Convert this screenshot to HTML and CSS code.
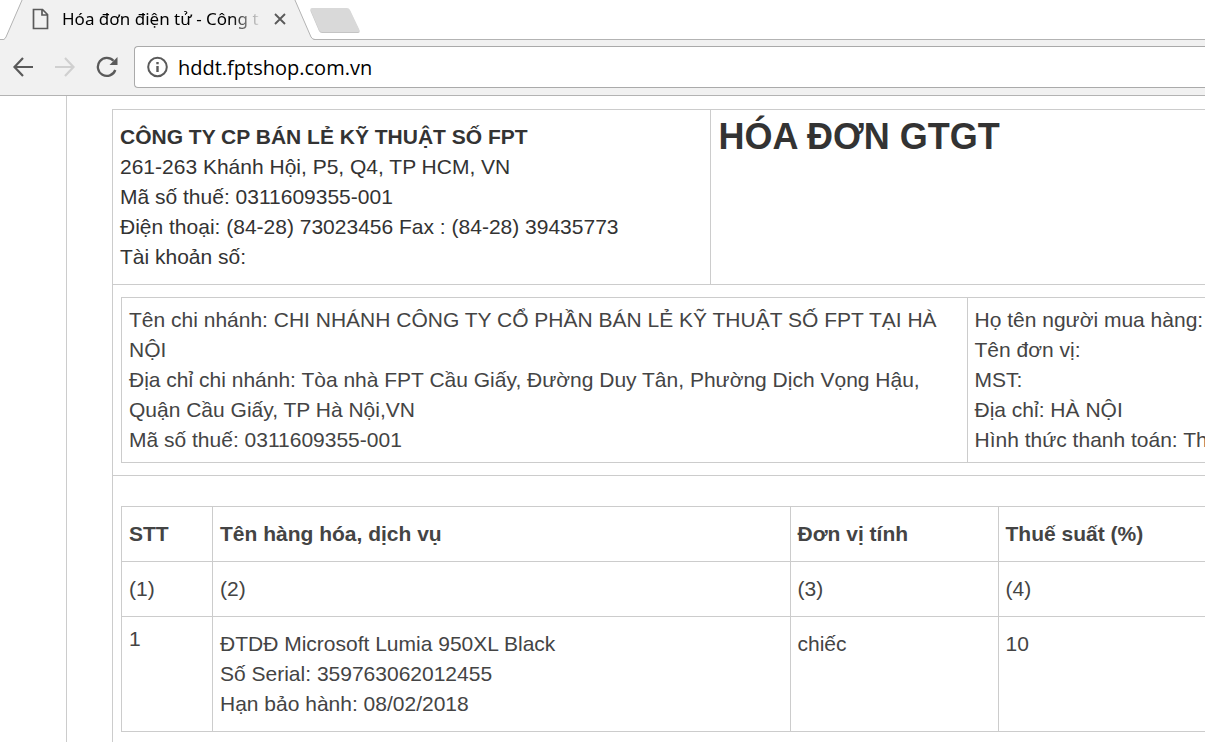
FILE: index.html
```
<!DOCTYPE html>
<html lang="vi">
<head>
    <meta charset="UTF-8">
    <meta name="viewport" content="width=device-width, initial-scale=1.0">
    <title>Hóa đơn điện tử</title>
    <link rel="stylesheet" href="styles.css">
</head>
<body>

    <!-- Browser bar -->
    <header class="browser">
        <div class="tabstrip">
            <div class="tab">
                <svg class="tab-shape" width="320" height="40" viewBox="0 0 320 40">
                    <path d="M3 40 Q5 39.5 6 37 L22.500 -1 H294.500 L311 37 Q312.500 40 315 40 Z" fill="#f1f1f1"/>
                    <path d="M0 39.500 H3.500 Q5 39 6 37 L22.500 -1 M294.500 -1 L311 37 Q312.500 39.500 315 39.500 H320" fill="none" stroke="#b3b3b3"/>
                </svg>
                <svg class="tab-icon" width="18" height="22" viewBox="0 0 18 22">
                    <path d="M2 1.500 H10.500 L15.500 6.500 V20.500 H1.500 V1.500 Z M10 1.500 V7 H15.500" fill="none" stroke="#5a5a5a" stroke-width="1.700"/>
                </svg>
                <span class="tab-title">Hóa đơn điện tử - Công t</span>
                <button class="tab-close" aria-label="Đóng thẻ">
                    <svg width="12" height="12" viewBox="0 0 12 12">
                        <path d="M1 1 L11 11 M11 1 L1 11" stroke="#5a5a5a" stroke-width="1.900"/>
                    </svg>
                </button>
            </div>
            <button class="new-tab" aria-label="Thẻ mới">
                <svg width="52" height="27" viewBox="0 0 52 27">
                    <path d="M3 2 H38 Q40 2 41 4 L50.500 24 Q51 26 49 26 H13 Q11 26 10 24 L1.500 4 Q1 2 3 2 Z" fill="#c4c4c4"/>
                    <path d="M3 1 H38 Q40 1 41 3 L50.500 23 Q51 25 49 25 H13 Q11 25 10 23 L1.500 3 Q1 1 3 1 Z" fill="#d9d9d9"/>
                </svg>
            </button>
        </div>
        <div class="toolbar">
            <button class="nav-button" aria-label="Quay lại">
                <svg width="22" height="22" viewBox="0 0 22 22">
                    <path d="M21 11 H3 M11 2 L2.500 11 L11 20" fill="none" stroke="#5a5a5a" stroke-width="2.200"/>
                </svg>
            </button>
            <button class="nav-button" aria-label="Tiến">
                <svg width="22" height="22" viewBox="0 0 22 22">
                    <path d="M1 11 H19 M11 2 L19.500 11 L11 20" fill="none" stroke="#d0d0d0" stroke-width="2.200"/>
                </svg>
            </button>
            <button class="nav-button" aria-label="Tải lại">
                <svg width="22" height="22" viewBox="0 0 22 22">
                    <path d="M19.300 14 A9 9 0 1 1 17.500 4.800" fill="none" stroke="#5a5a5a" stroke-width="2.300"/>
                    <path d="M21.500 1 V9 H13.500 Z" fill="#5a5a5a"/>
                </svg>
            </button>
            <div class="address">
                <svg width="22" height="22" viewBox="0 0 22 22">
                    <circle cx="10.500" cy="11" r="9.300" fill="none" stroke="#5a5a5a" stroke-width="2"/>
                    <path d="M10.500 10 V16 M10.500 6 V8.200" stroke="#5a5a5a" stroke-width="2.400"/>
                </svg>
                <input class="url" type="text" aria-label="Địa chỉ" value="hddt.fptshop.com.vn">
            </div>
        </div>
    </header>

    <!-- Invoice -->
    <main class="page">
        <div class="invoice">
            <section class="head">
                <div class="company">
                    <b>CÔNG TY CP BÁN LẺ KỸ THUẬT SỐ FPT</b><br>
                    261-263 Khánh Hội, P5, Q4, TP HCM, VN<br>
                    Mã số thuế: 0311609355-001<br>
                    Điện thoại: (84-28) 73023456 Fax : (84-28) 39435773<br>
                    Tài khoản số:
                </div>
                <h1 class="title">HÓA ĐƠN GTGT</h1>
            </section>

            <section class="parties">
                <div class="branch">
                    Tên chi nhánh: CHI NHÁNH CÔNG TY CỔ PHẦN BÁN LẺ KỸ THUẬT SỐ FPT TẠI HÀ NỘI<br>
                    Địa chỉ chi nhánh: Tòa nhà FPT Cầu Giấy, Đường Duy Tân, Phường Dịch Vọng Hậu, Quận Cầu Giấy, TP Hà Nội,VN<br>
                    Mã số thuế: 0311609355-001
                </div>
                <div class="buyer">
                    Họ tên người mua hàng:<br>
                    Tên đơn vị:<br>
                    MST:<br>
                    Địa chỉ: HÀ NỘI<br>
                    Hình thức thanh toán: Th
                </div>
            </section>

            <section class="goods">
                <table class="items">
                    <thead>
                        <tr>
                            <th class="col-no">STT</th>
                            <th class="col-name">Tên hàng hóa, dịch vụ</th>
                            <th class="col-unit">Đơn vị tính</th>
                            <th>Thuế suất (%)</th>
                        </tr>
                    </thead>
                    <tbody>
                        <tr>
                            <td>(1)</td>
                            <td>(2)</td>
                            <td>(3)</td>
                            <td>(4)</td>
                        </tr>
                        <tr>
                            <td class="number">1</td>
                            <td>
                                ĐTDĐ Microsoft Lumia 950XL Black<br>
                                Số Serial: 359763062012455<br>
                                Hạn bảo hành: 08/02/2018
                            </td>
                            <td>chiếc</td>
                            <td>10</td>
                        </tr>
                    </tbody>
                </table>
            </section>
        </div>
    </main>

</body>
</html>
```

FILE: styles.css
```
* {
    box-sizing: border-box;
}
body {
    margin: 0;
    min-height: 100vh;
    display: flex;
    flex-direction: column;
    overflow: hidden;
    background-color: white;
    color: #444;
    font-family: "Liberation Sans", Arial, sans-serif;
    font-size: 21px;
    line-height: 30px;
}
button {
    padding: 0;
    border: 0;
    background: none;
    display: flex;
}

/* Browser bar */
.browser {
    font-family: "Open Sans", "Segoe UI", sans-serif;
    color: black;
}
.tabstrip {
    display: flex;
    height: 40px;
    border-bottom: 1px solid #b3b3b3;
}
.tab {
    position: relative;
    display: flex;
    align-items: center;
    width: 308px;
    height: 38px;
    padding: 0 22px 0 32px;
}
.tab-shape {
    position: absolute;
    left: 0;
    top: 0;
}
.tab-icon, .tab-title, .tab-close {
    position: relative;
}
.tab-title {
    flex: 1;
    margin: 0 12px;
    overflow: hidden;
    white-space: nowrap;
    font-family: "Noto Sans", "Segoe UI", sans-serif;
    font-size: 17px;
    -webkit-mask-image: linear-gradient(to right, black 85%, transparent);
    mask-image: linear-gradient(to right, black 85%, transparent);
}
.new-tab {
    padding-top: 7px;
    margin-left: 1px;
}
.toolbar {
    display: flex;
    align-items: center;
    gap: 20px;
    height: 56px;
    padding-left: 12px;
    padding-bottom: 1px;
    background-color: #f1f1f1;
    border-bottom: 1px solid #b3b3b3;
}
.address {
    flex: 1;
    display: flex;
    align-items: center;
    gap: 9px;
    height: 42px;
    margin-left: -4px;
    padding-left: 12px;
    background-color: white;
    border: 1px solid #aaa;
    border-right: 0;
    border-radius: 4px 0 0 4px;
}
.url {
    flex: 1;
    padding: 0;
    border: 0;
    outline: 0;
    color: black;
    font-family: inherit;
    font-size: 20px;
}

/* Invoice */
.page {
    flex: 1;
    display: flex;
    margin-left: 66px;
    padding: 13px 0 0 45px;
    border-left: 1px solid #ccc;
}
.invoice {
    flex: 1;
    border-left: 1px solid #ccc;
    border-top: 1px solid #ccc;
}
.head {
    display: flex;
    color: #333;
    border-bottom: 1px solid #ccc;
}
.company {
    width: 54.8%;
    padding: 12px 7px;
    border-right: 1px solid #ccc;
}
.title {
    margin: 0;
    padding: 7px;
    font-size: 36px;
    line-height: 40px;
}
.parties {
    display: flex;
    padding: 12px 0 12px 8px;
    border-bottom: 1px solid #ccc;
}
.branch, .buyer {
    padding: 7px;
    border: 1px solid #ccc;
    border-right: 0;
}
.branch {
    width: 78%;
}
.buyer {
    flex: 1;
    min-width: 0;
    padding-right: 0;
    white-space: nowrap;
}
.goods {
    padding: 30px 0 10px 8px;
}
.items {
    width: 100%;
    table-layout: fixed;
    border-collapse: collapse;
}
.items th, .items td {
    padding: 12px 7px;
    border: 1px solid #ccc;
    border-right: 0;
    text-align: left;
    vertical-align: top;
}
.items .number {
    padding-top: 7px;
}
.col-no {
    width: 8.4%;
}
.col-name {
    width: 53.3%;
}
.col-unit {
    width: 19.2%;
}
```
